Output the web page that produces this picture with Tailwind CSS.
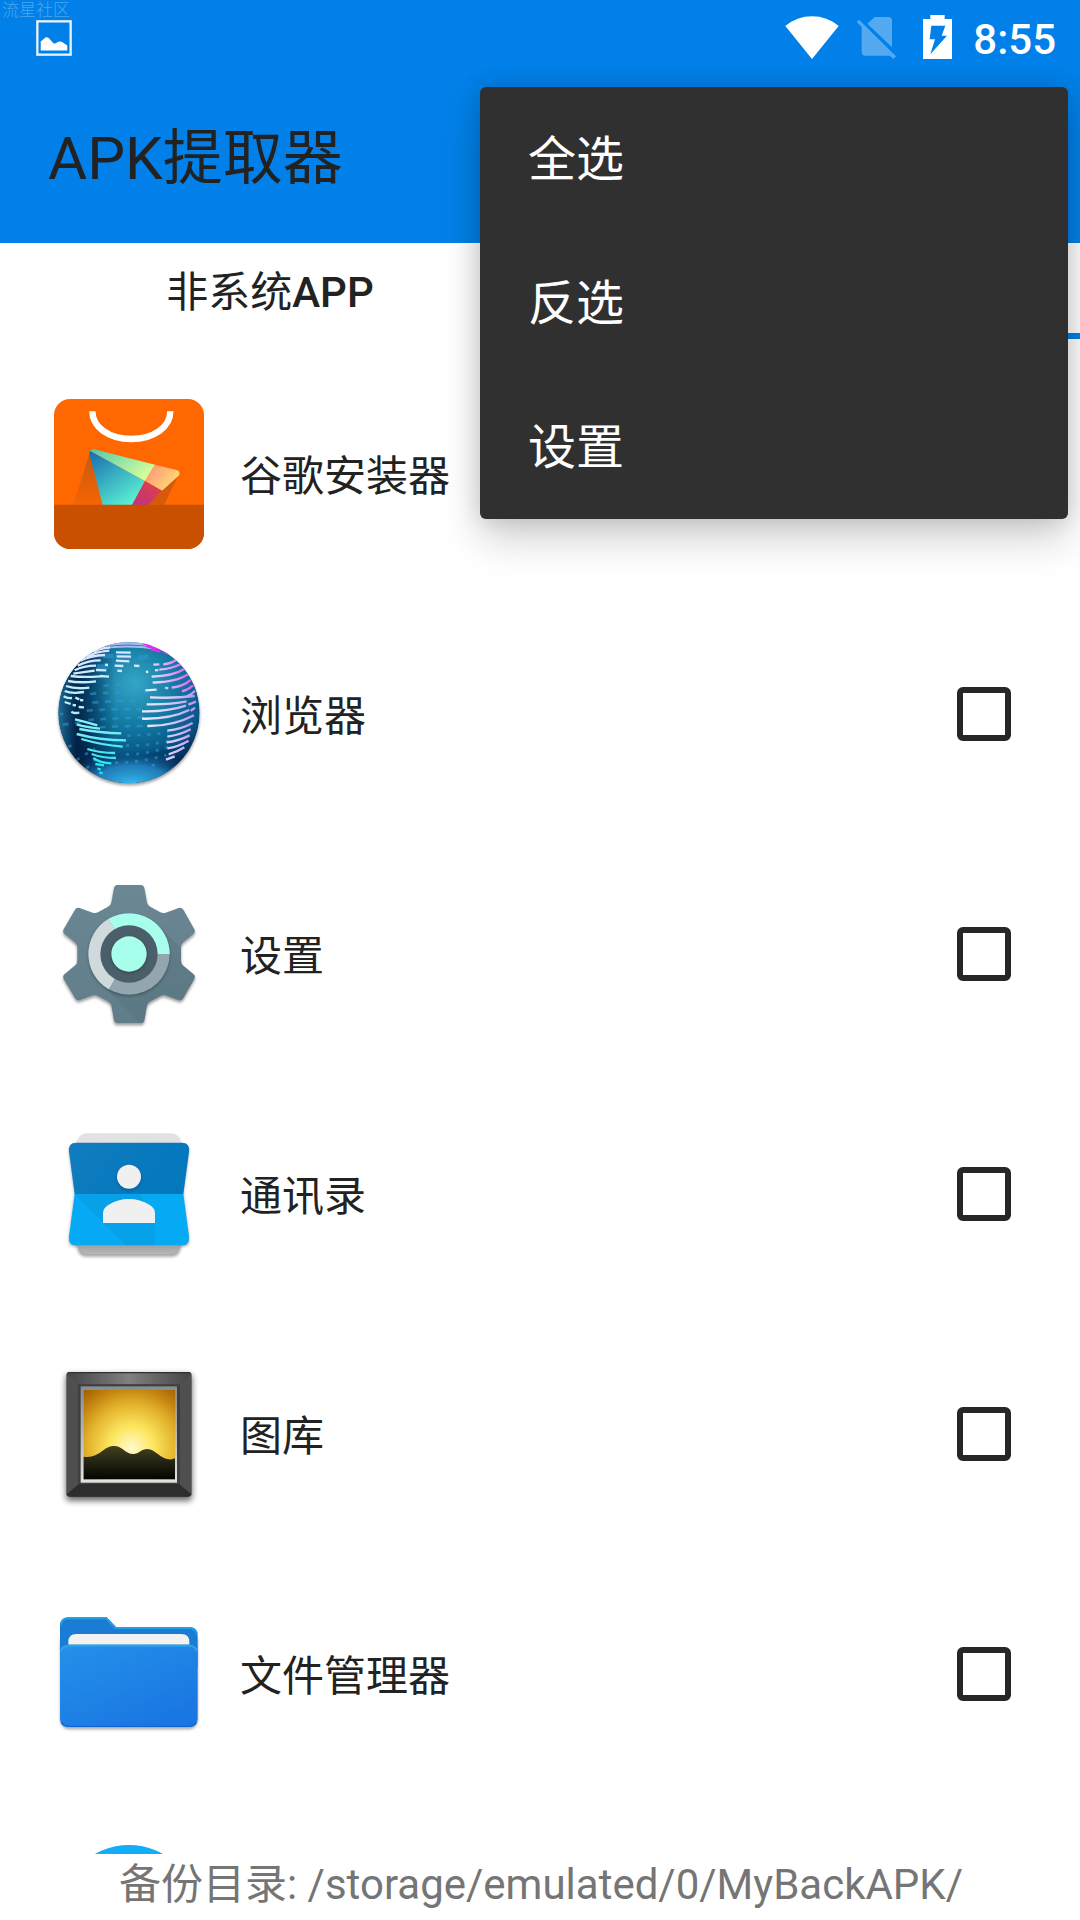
<!DOCTYPE html>
<html lang="zh-CN">
<head>
<meta charset="utf-8">
<meta name="viewport" content="width=device-width, initial-scale=1">
<title>APK提取器</title>
<script src="https://cdn.jsdelivr.net/npm/@tailwindcss/browser@4"></script>
</head>
<body class="bg-white font-[Roboto,'Noto_Sans_CJK_SC',sans-serif] text-[#222222]">
<div class="relative flex h-screen flex-col overflow-hidden">

  <header class="shrink-0 bg-[#0080e8]">
    <!-- Status bar -->
    <div class="relative flex h-[75px] items-center pl-9 pr-6 text-white">
      <span class="absolute left-0.5 top-0 text-[17px] leading-5 font-light text-[#4ba6ef]">流星社区</span>
      <svg class="size-9" viewBox="108 60 107 107" aria-hidden="true">
        <rect x="112" y="64" width="99" height="99" fill="none" stroke="#e6f2fd" stroke-width="7"/>
        <path d="M122 151V124L135 113Q141 109 147 115L160 129Q164 132 170 127Q180 121 188 127L201 136V151Z" fill="#fff"/>
      </svg>
      <div class="ml-auto flex items-center">
        <svg class="h-[43px] w-[54px]" viewBox="74 47 162 129" aria-hidden="true">
          <path d="M75 77Q110 48 155 48Q200 48 235 77L155 176Z" fill="#fff"/>
        </svg>
        <svg class="ml-[17px] h-[42px] w-10" viewBox="288 54 120 126" aria-hidden="true">
          <g fill="#54a9f0">
            <path d="M344 54H385Q396 54 396 65V145L322 74Z"/>
            <path d="M290 69L297 62L408 172L401 180L389 170H317Q305 170 305 158V84Z"/>
          </g>
        </svg>
        <svg class="mb-0.5 ml-[27px] h-[44px] w-[29px]" viewBox="489 45 87 132" aria-hidden="true">
          <path d="M511 45H554V57H576V177H489V57H511Z" fill="#fff"/>
          <path d="M514 77H556L545 107H561L511 163L525 118H509Z" fill="#0080e8"/>
        </svg>
        <time class="ml-[21px] pt-1 text-[42px] leading-none font-medium">8:55</time>
      </div>
    </div>
    <!-- Title bar -->
    <div class="flex h-42 items-center px-12">
      <h1 class="text-[60px] leading-none">APK提取器</h1>
    </div>
  </header>

  <!-- Tabs -->
  <div class="grid h-24 shrink-0 grid-cols-2" role="tablist">
    <button type="button" role="tab" aria-selected="false" class="pt-1 text-[42px] leading-none font-medium"><span class="font-normal">非系统</span>APP</button>
    <button type="button" role="tab" aria-selected="true" class="border-b-6 border-[#0080e8]"></button>
  </div>

  <!-- App list -->
  <ul class="min-h-0 flex-1 overflow-hidden pt-[15px] text-[42px]">
    <li><label class="flex h-60 items-center pl-[54px] pr-[69px]">
      <svg class="size-[150px] shrink-0" viewBox="72 57 450 450" aria-hidden="true">
        <defs>
          <clipPath id="bag"><rect x="72" y="57" width="450" height="450" rx="48"/></clipPath>
          <linearGradient id="pb" x1="0" y1="0" x2=".7" y2="1"><stop offset="0" stop-color="#1769b0"/><stop offset="1" stop-color="#5af0d2"/></linearGradient>
          <linearGradient id="pg" x1="0" y1="0" x2="1" y2=".6"><stop offset="0" stop-color="#4fc7ae"/><stop offset="1" stop-color="#d5ff9c"/></linearGradient>
          <linearGradient id="py" x1="0" y1="0" x2="1" y2=".6"><stop offset="0" stop-color="#ff8c7c"/><stop offset="1" stop-color="#ffdc72"/></linearGradient>
          <linearGradient id="pr" x1="0" y1="1" x2="1" y2="0"><stop offset="0" stop-color="#b83488"/><stop offset="1" stop-color="#e8403c"/></linearGradient>
          <linearGradient id="ps" x1="0" y1="0" x2="0" y2="1"><stop offset="0" stop-color="#c65812"/><stop offset="1" stop-color="#f56403"/></linearGradient>
        </defs>
        <g clip-path="url(#bag)">
          <path fill="#ff6700" d="M72 57H522V507H72Z"/>
          <path d="M187 94C187 140 235 177 304 177S421 140 421 94" fill="none" stroke="#fff" stroke-width="19"/>
          <path d="M179 218L130 374H218Z" fill="url(#ps)"/>
          <path d="M446 284L396 332L355 374H402Z" fill="#d65a0c"/>
          <path d="M180 212L345 303L306 375H218L180 228Q177 218 180 212Z" fill="url(#pb)"/>
          <path d="M180 212Q184 206 192 208L375 254L345 303Z" fill="url(#pg)"/>
          <path d="M375 254L440 270Q454 276 446 287L396 332L345 303Z" fill="url(#py)"/>
          <path d="M345 303L396 332L355 375H306Z" fill="url(#pr)"/>
          <path fill="#c85000" d="M72 374H522V507H72Z"/>
        </g>
      </svg>
      <span class="ml-9 flex-1 pt-1">谷歌安装器</span>
      <input type="checkbox" class="size-[54px] appearance-none rounded-md border-6 border-[#262626]">
    </label></li>

    <li><label class="flex h-60 items-center pl-[54px] pr-[69px]">
      <svg class="size-[150px] shrink-0 overflow-visible" viewBox="42 57 450 450" aria-hidden="true">
        <defs>
          <radialGradient id="globe" gradientUnits="userSpaceOnUse" cx="285" cy="190" r="270"><stop offset="0" stop-color="#35a6c4"/><stop offset=".45" stop-color="#137ba3"/><stop offset=".8" stop-color="#085584"/><stop offset="1" stop-color="#04284f"/></radialGradient>
          <radialGradient id="glow" gradientUnits="userSpaceOnUse" cx="275" cy="495" r="215" gradientTransform="translate(0 248) scale(1 .5)"><stop offset="0" stop-color="#37bdf2"/><stop offset=".55" stop-color="#2389ca" stop-opacity=".85"/><stop offset="1" stop-color="#07416f" stop-opacity="0"/></radialGradient>
          <linearGradient id="dark" x1="0" x2="1"><stop offset="0" stop-color="#1c6f9b"/><stop offset=".13" stop-color="#021f42" stop-opacity=".9"/><stop offset=".4" stop-color="#021f42" stop-opacity="0"/></linearGradient>
          <linearGradient id="pink" gradientUnits="userSpaceOnUse" x1="310" y1="100" x2="465" y2="60"><stop offset="0" stop-color="#e6e8ff"/><stop offset=".4" stop-color="#dfa3fa"/><stop offset="1" stop-color="#e128ee"/></linearGradient>
          <linearGradient id="lilac" gradientUnits="userSpaceOnUse" x1="310" y1="0" x2="470" y2="0"><stop offset="0" stop-color="#f0ecff"/><stop offset=".6" stop-color="#cfc4fa"/><stop offset="1" stop-color="#c08cf2"/></linearGradient>
          <linearGradient id="cyan" gradientUnits="userSpaceOnUse" x1="0" y1="90" x2="0" y2="460"><stop offset="0" stop-color="#e0e2ff"/><stop offset=".45" stop-color="#b5f3fb"/><stop offset="1" stop-color="#14e4ec"/></linearGradient>
          <clipPath id="ball"><circle cx="267" cy="278" r="212"/></clipPath>
          <filter id="soft" x="-20%" y="-20%" width="140%" height="140%"><feGaussianBlur stdDeviation="4"/></filter>
        </defs>
        <circle cx="267" cy="284" r="212" fill="#000" opacity=".4" filter="url(#soft)"/>
        <g clip-path="url(#ball)" fill="none">
          <circle cx="267" cy="278" r="212" fill="url(#globe)"/>
          <circle cx="267" cy="278" r="212" fill="url(#dark)"/>
          <path d="M105 395Q270 440 455 355L445 400Q300 440 150 430Z" fill="#033460" opacity=".5" filter="url(#soft)"/>
          <circle cx="267" cy="278" r="212" fill="url(#glow)"/>
          <g stroke="#2f9bd8" stroke-width="8" opacity=".55">
            <path stroke-dasharray="18 19" d="M190 198Q260 190 335 198M150 222Q250 212 330 220M157 248Q240 240 310 244M140 272Q230 266 305 268M68 314L140 305M145 300Q230 294 320 292M180 322Q240 318 320 318"/>
            <path stroke-dasharray="10 20" d="M60 282H72M262 347Q320 345 385 338M258 377Q320 378 390 362M258 403Q310 405 390 380M225 428Q290 430 380 405M85 380L112 370M110 420L165 385M140 445L175 410M335 436H345"/>
            <path stroke-width="14" d="M293 114L325 110M190 108H220M170 140H205"/>
          </g>
          <g stroke="#a8b9ee" stroke-width="6">
            <path d="M238 66Q270 60 310 68M205 75Q270 64 345 78M190 84Q265 74 350 86"/>
          </g>
          <g stroke="url(#cyan)" stroke-width="7">
            <path d="M160 95Q180 85 210 82M140 110Q165 96 208 92M122 122Q150 107 195 105M113 137Q145 121 182 121M104 151Q130 137 168 137M100 161Q130 156 164 152M92 168Q130 173 180 169M84 183Q120 190 168 184M78 198Q105 208 148 203M74 213Q95 222 132 216M71 229Q82 236 96 234M74 246L92 252M228 97L272 98M230 109L273 110M228 122L268 124M224 137L250 138M282 137L298 138M232 152L246 153M195 134L204 135M168 150L199 151M180 168L207 170M106 233L118 238M120 240L130 241M98 255L108 256M116 261L132 262M94 275Q104 281 118 278M105 298Q135 305 172 316M110 313Q140 322 180 326M118 327Q180 339 244 340M110 342Q180 361 258 361M124 357Q185 375 248 380M142 387Q180 399 225 399M155 402Q185 414 228 414M160 414Q180 429 214 430M166 432L192 436M172 446L182 448M178 457L188 460"/>
          </g>
          <g stroke="url(#pink)" stroke-width="7">
            <path d="M370 133Q395 130 408 120M358 149Q395 146 424 131M335 170Q400 168 433 147M338 188Q410 186 444 163M395 203Q430 199 452 180M426 214Q446 209 459 196M316 211L350 209M340 134L358 133M345 151L355 150M318 156L325 155M375 203L385 205"/>
            <path stroke="#e32aef" d="M310 71L338 76M318 78L350 87M333 88L362 95M370 95L384 101"/>
          </g>
          <g stroke="url(#lilac)" stroke-width="7">
            <path d="M440 229Q455 224 465 212M330 232Q400 236 464 228M320 253Q395 254 440 244M306 274Q380 276 438 257M306 296Q390 298 448 270M322 318Q400 319 462 286M445 254L468 245M452 272L465 263M382 332Q425 327 458 309M382 350Q420 345 452 328M380 367Q415 363 449 346M382 385Q415 380 446 362M386 403Q412 396 433 382M378 419L404 409"/>
          </g>
        </g>
      </svg>
      <span class="ml-9 flex-1 pt-1">浏览器</span>
      <input type="checkbox" class="size-[54px] appearance-none rounded-md border-6 border-[#262626]">
    </label></li>

    <li><label class="flex h-60 items-center pl-[54px] pr-[69px]">
      <svg class="size-[150px] shrink-0 overflow-visible" viewBox="42 27 450 450" aria-hidden="true">
        <defs>
          <linearGradient id="gear" x1="0" y1="0" x2="0" y2="1"><stop offset="0" stop-color="#6b8793"/><stop offset="1" stop-color="#607d8a"/></linearGradient>
          <path id="cog" d="M233 45H302Q311 45 313 54L321 98Q323 106 331 110L361 127Q369 131 377 128L416 114Q424 111 430 119L463 178Q467 186 460 192L430 216Q423 222 423 231V272Q423 281 430 287L460 312Q467 318 463 326L430 384Q425 393 416 390L377 376Q369 373 361 378L331 394Q323 398 321 406L313 451Q311 459 302 459H233Q224 459 222 451L214 406Q212 398 204 394L174 378Q166 373 158 376L119 390Q110 393 105 384L71 326Q67 318 74 312L104 287Q112 281 112 272V231Q112 222 104 216L74 192Q67 186 71 178L105 119Q110 111 119 114L158 128Q166 131 174 127L204 110Q212 106 214 98L222 54Q224 45 233 45Z"/>
          <clipPath id="cogclip"><use href="#cog"/></clipPath>
        </defs>
        <use href="#cog" y="7" opacity=".4" filter="url(#soft)"/>
        <use href="#cog" fill="url(#gear)"/>
        <path clip-path="url(#cogclip)" d="M353 165L480 292V480H320L182 338Z" fill="#4d6874" opacity=".25"/>
        <circle cx="267" cy="256" r="122" opacity=".3" filter="url(#soft)"/>
        <circle cx="267" cy="252" r="122" fill="#93a6b0"/>
        <path d="M267 252L206 357.500A122 122 0 0 1 206 146.500Z" fill="#d0d9dc"/>
        <path d="M267 252L206 146.500A122 122 0 0 1 389 252Z" fill="#a7ffeb"/>
        <circle cx="267" cy="252" r="86" fill="#4a5f69"/>
        <circle cx="267" cy="255" r="54" opacity=".25" filter="url(#soft)"/>
        <circle cx="267" cy="252" r="53" fill="#a7ffeb"/>
      </svg>
      <span class="ml-9 flex-1 pt-1">设置</span>
      <input type="checkbox" class="size-[54px] appearance-none rounded-md border-6 border-[#262626]">
    </label></li>

    <li><label class="flex h-60 items-center pl-[54px] pr-[69px]">
      <svg class="size-[150px] shrink-0 overflow-visible" viewBox="42 27 450 450" aria-hidden="true">
        <defs>
          <linearGradient id="cardtop" x1="0" y1="0" x2="1" y2=".3"><stop offset="0" stop-color="#107dbf"/><stop offset="1" stop-color="#0477bd"/></linearGradient>
          <linearGradient id="cardback" x1="0" y1="0" x2="0" y2="1"><stop offset=".85" stop-color="#e2e2e2"/><stop offset=".93" stop-color="#a0a0a0"/><stop offset="1" stop-color="#b8b8b8"/></linearGradient>
        </defs>
        <rect x="112" y="78" width="310" height="362" rx="26" opacity=".35" filter="url(#soft)"/>
        <path d="M104 252L87 122V112H447V122L430 252L447 382V396Q445 410 427 410H107Q88 410 87 396V382Z" opacity=".35" filter="url(#soft)"/>
        <rect x="112" y="70" width="310" height="362" rx="28" fill="url(#cardback)"/>
        <path d="M104 252L87 125Q84 98 108 98H426Q450 98 447 125L430 252Z" fill="url(#cardtop)"/>
        <path d="M104 252H430L447 380Q449 406 426 406H108Q85 406 87 380Z" fill="#06a9f4"/>
        <path d="M104 252L258 406H345V339L300 252Z" fill="#0a8ecf" opacity=".3"/>
        <circle cx="267" cy="205" r="36" opacity=".25" filter="url(#soft)"/>
        <circle cx="267" cy="200" r="36" fill="#f0f0f0"/>
        <path d="M189 339V310Q189 294 206 284Q233 267 267 267Q301 267 328 284Q345 294 345 310V339Z" fill="#f0f0f0"/>
      </svg>
      <span class="ml-9 flex-1 pt-1">通讯录</span>
      <input type="checkbox" class="size-[54px] appearance-none rounded-md border-6 border-[#262626]">
    </label></li>

    <li><label class="flex h-60 items-center pl-[54px] pr-[69px]">
      <svg class="size-[150px] shrink-0 overflow-visible" viewBox="42 27 450 450" aria-hidden="true">
        <defs>
          <radialGradient id="sun" gradientUnits="userSpaceOnUse" cx="275" cy="295" r="220"><stop offset="0" stop-color="#fffbd0"/><stop offset=".3" stop-color="#fce65f"/><stop offset=".6" stop-color="#e3b32c"/><stop offset=".82" stop-color="#c4830f"/><stop offset="1" stop-color="#a46206"/></radialGradient>
          <linearGradient id="hill" x1="0" y1="0" x2="0" y2="1"><stop offset="0" stop-color="#44421d"/><stop offset=".4" stop-color="#292814"/><stop offset="1" stop-color="#050502"/></linearGradient>
          <linearGradient id="frametop" x1="0" x2="1"><stop offset="0" stop-color="#444"/><stop offset=".5" stop-color="#808080"/><stop offset="1" stop-color="#444"/></linearGradient>
          <linearGradient id="silver" x1="0" y1="0" x2="0" y2="1"><stop offset="0" stop-color="#858d92"/><stop offset="1" stop-color="#e4e4e0"/></linearGradient>
          <filter id="soft2" x="-20%" y="-20%" width="140%" height="140%"><feGaussianBlur stdDeviation="9"/></filter>
        </defs>
        <rect x="78" y="74" width="378" height="378" rx="10" opacity=".6" filter="url(#soft2)"/>
        <rect x="79" y="66" width="376" height="374" rx="10" fill="#4f4f4f"/>
        <path d="M89 66H445Q452 66 454 73L417 103H117L80 73Q82 66 89 66Z" fill="url(#frametop)"/>
        <path d="M80 433L117 401H417L454 433Q452 440 445 440H89Q82 440 80 433Z" fill="#2d2d2d"/>
        <path d="M84 68H450" stroke="#303030" stroke-width="4"/>
        <rect x="114" y="103" width="306" height="298" fill="#3f3f3f"/>
        <rect x="122" y="109" width="289" height="289" fill="url(#silver)"/>
        <rect x="131" y="120" width="274" height="268" fill="url(#sun)"/>
        <path d="M131 320C180 326 188 288 222 288C248 288 255 312 280 312C297 312 303 297 322 297C345 297 362 327 387 328Q397 329 405 325V388H131Z" fill="url(#hill)"/>
      </svg>
      <span class="ml-9 flex-1 pt-1">图库</span>
      <input type="checkbox" class="size-[54px] appearance-none rounded-md border-6 border-[#262626]">
    </label></li>

    <li><label class="flex h-60 items-center pl-[54px] pr-[69px]">
      <svg class="size-[150px] shrink-0 overflow-visible" viewBox="42 -3 450 450" aria-hidden="true">
        <defs>
          <linearGradient id="folder" x1="0" y1="0" x2=".7" y2="1"><stop offset="0" stop-color="#2491ea"/><stop offset="1" stop-color="#1a76e2"/></linearGradient>
        </defs>
        <rect x="61" y="100" width="412" height="288" rx="26" opacity=".35" filter="url(#soft)"/>
        <path d="M60 78Q60 52 86 52H200L228 81H447Q473 81 473 107V200H60Z" fill="#1b7cd6"/>
        <path d="M62 74Q66 55 86 55H199L227 84H447Q466 84 471 101" fill="none" stroke="#23a0e4" stroke-width="6"/>
        <path d="M85 134V126Q85 102 109 102H424Q448 102 448 126V134Z" fill="#f2f2f2"/>
        <path d="M60 160Q60 134 86 134H447Q473 134 473 160V355Q473 381 447 381H86Q60 381 60 355Z" fill="url(#folder)"/>
        <path d="M62 154Q68 137 86 137H447Q465 137 471 154" fill="none" stroke="#2ba3e6" stroke-width="6"/>
        <path d="M64 367Q72 379 86 379H447Q461 379 469 367" fill="none" stroke="#1465d8" stroke-width="4"/>
      </svg>
      <span class="ml-9 flex-1 pt-1">文件管理器</span>
      <input type="checkbox" class="size-[54px] appearance-none rounded-md border-6 border-[#262626]">
    </label></li>

    <li class="flex h-60 items-center pl-[54px]">
      <svg class="size-[150px] shrink-0" viewBox="0 0 150 150" aria-hidden="true"><circle cx="75" cy="75" r="69" fill="#12adf6"/></svg>
    </li>
  </ul>

  <footer class="flex h-[66px] shrink-0 items-center justify-center bg-white pb-1 pl-0.5 text-[42px] leading-none text-[#757575]">备份目录: /storage/emulated/0/MyBackAPK/</footer>

  <!-- Overflow menu -->
  <div role="menu" class="absolute right-3 top-[87px] flex w-[588px] flex-col rounded-md bg-[#303030] text-5xl text-white shadow-[0_20px_40px_rgba(0,0,0,0.18),0_0_24px_rgba(0,0,0,0.14)]">
    <button type="button" role="menuitem" class="h-36 px-12 pt-0.5 text-left">全选</button>
    <button type="button" role="menuitem" class="h-36 px-12 pt-0.5 text-left">反选</button>
    <button type="button" role="menuitem" class="h-36 px-12 pt-0.5 text-left">设置</button>
  </div>
</div>
</body>
</html>
